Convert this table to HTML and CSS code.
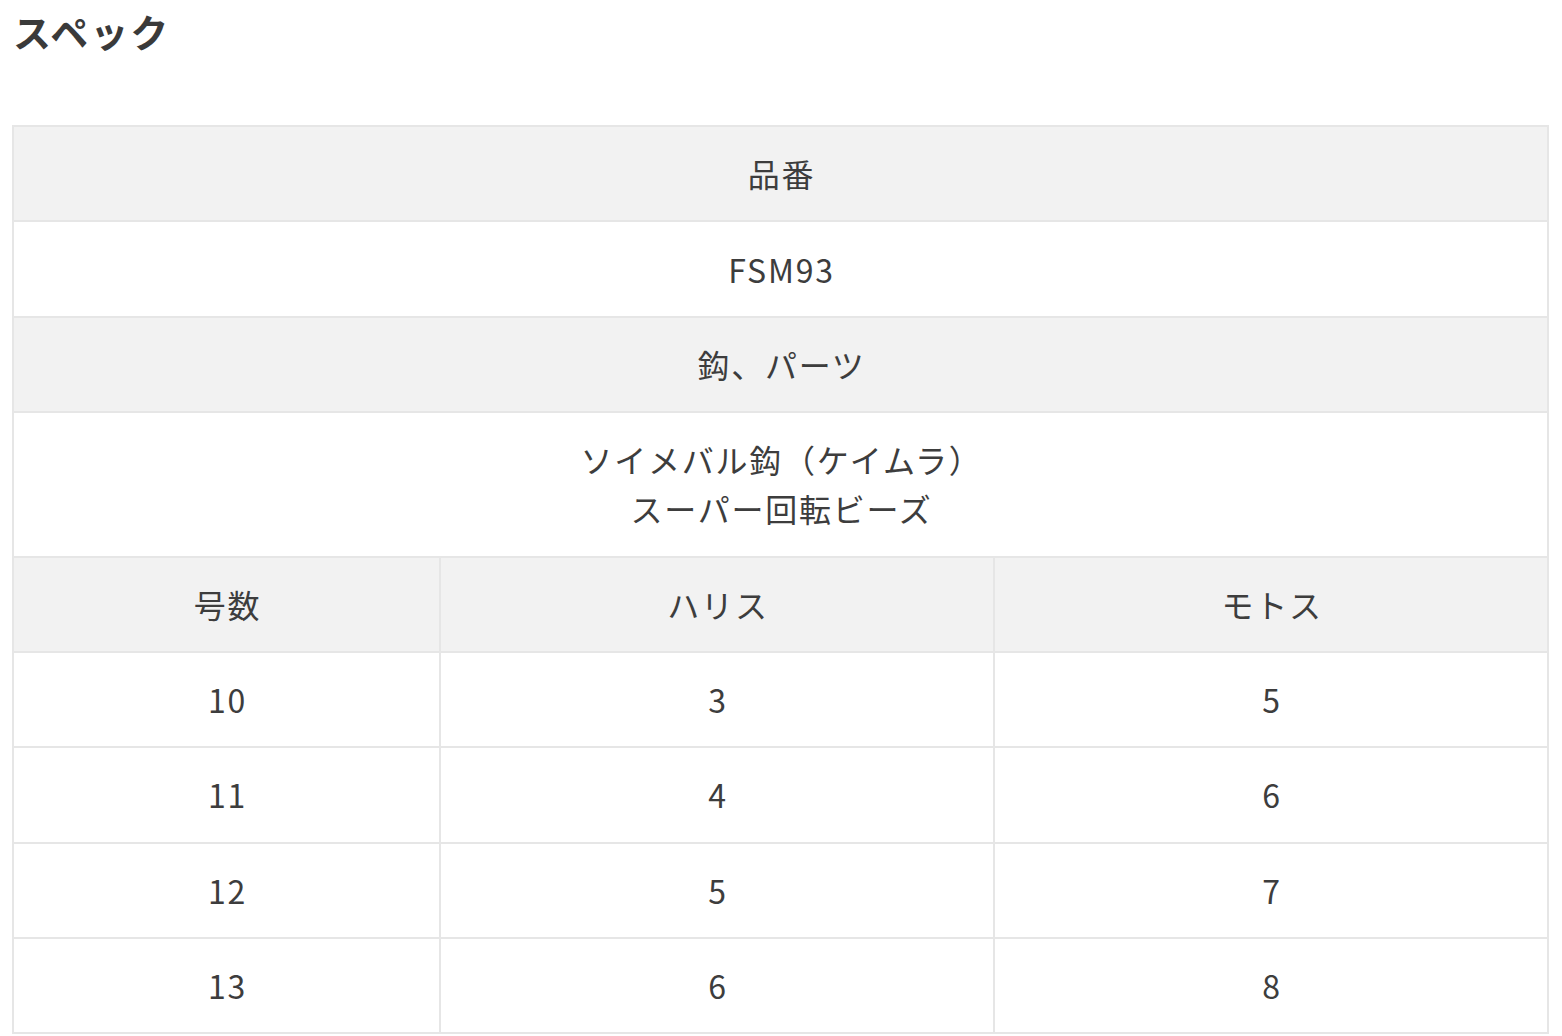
FILE: index.html
```html
<!DOCTYPE html>
<html lang="ja">
<head>
<meta charset="utf-8">
<link rel="stylesheet" href="styles.css">
</head>
<body>
<div class="page">
  <h2 class="title">スペック</h2>
  <table class="spec">
    <colgroup>
      <col class="c1"><col class="c2"><col class="c3">
    </colgroup>
    <tbody>
      <tr><th colspan="3">品番</th></tr>
      <tr><td colspan="3">FSM93</td></tr>
      <tr><th colspan="3">鈎、パーツ</th></tr>
      <tr><td colspan="3">ソイメバル鈎（ケイムラ）<br>スーパー回転ビーズ</td></tr>
      <tr><th>号数</th><th>ハリス</th><th>モトス</th></tr>
      <tr><td>10</td><td>3</td><td>5</td></tr>
      <tr><td>11</td><td>4</td><td>6</td></tr>
      <tr><td>12</td><td>5</td><td>7</td></tr>
      <tr><td>13</td><td>6</td><td>8</td></tr>
    </tbody>
  </table>
</div>
</body>
</html>
```
FILE: styles.css
```css
html, body {
  margin: 0;
  padding: 0;
  background: #ffffff;
}
body {
  font-family: "Noto Sans CJK JP", "Noto Sans", sans-serif;
  color: #3d3d3d;
}
.page {
  padding: 0 14px 0 12px;
}
.title {
  margin: 0;
  padding-top: 4px;
  font-size: 38px;
  line-height: 1.4;
  font-weight: 700;
  letter-spacing: 2px;
  color: #3a3a3a;
  height: 125px;
  box-sizing: border-box;
  margin-left: 1px;
}
.spec {
  width: 1535px;
  border-collapse: collapse;
  table-layout: fixed;
  font-size: 32px;
  letter-spacing: 0.055em;
}
.c1 { width: 427px; }
.c2 { width: 554px; }
.c3 { width: 554px; }
.spec th,
.spec td {
  border: 2px solid #e6e6e6;
  text-align: center;
  vertical-align: middle;
  line-height: 49px;
  padding: 22.2px 10px 22.2px 12px;
  font-weight: 400;
  color: #3d3d3d;
}
.spec th {
  background: #f2f2f2;
}
.spec td {
  background: #ffffff;
}
```
